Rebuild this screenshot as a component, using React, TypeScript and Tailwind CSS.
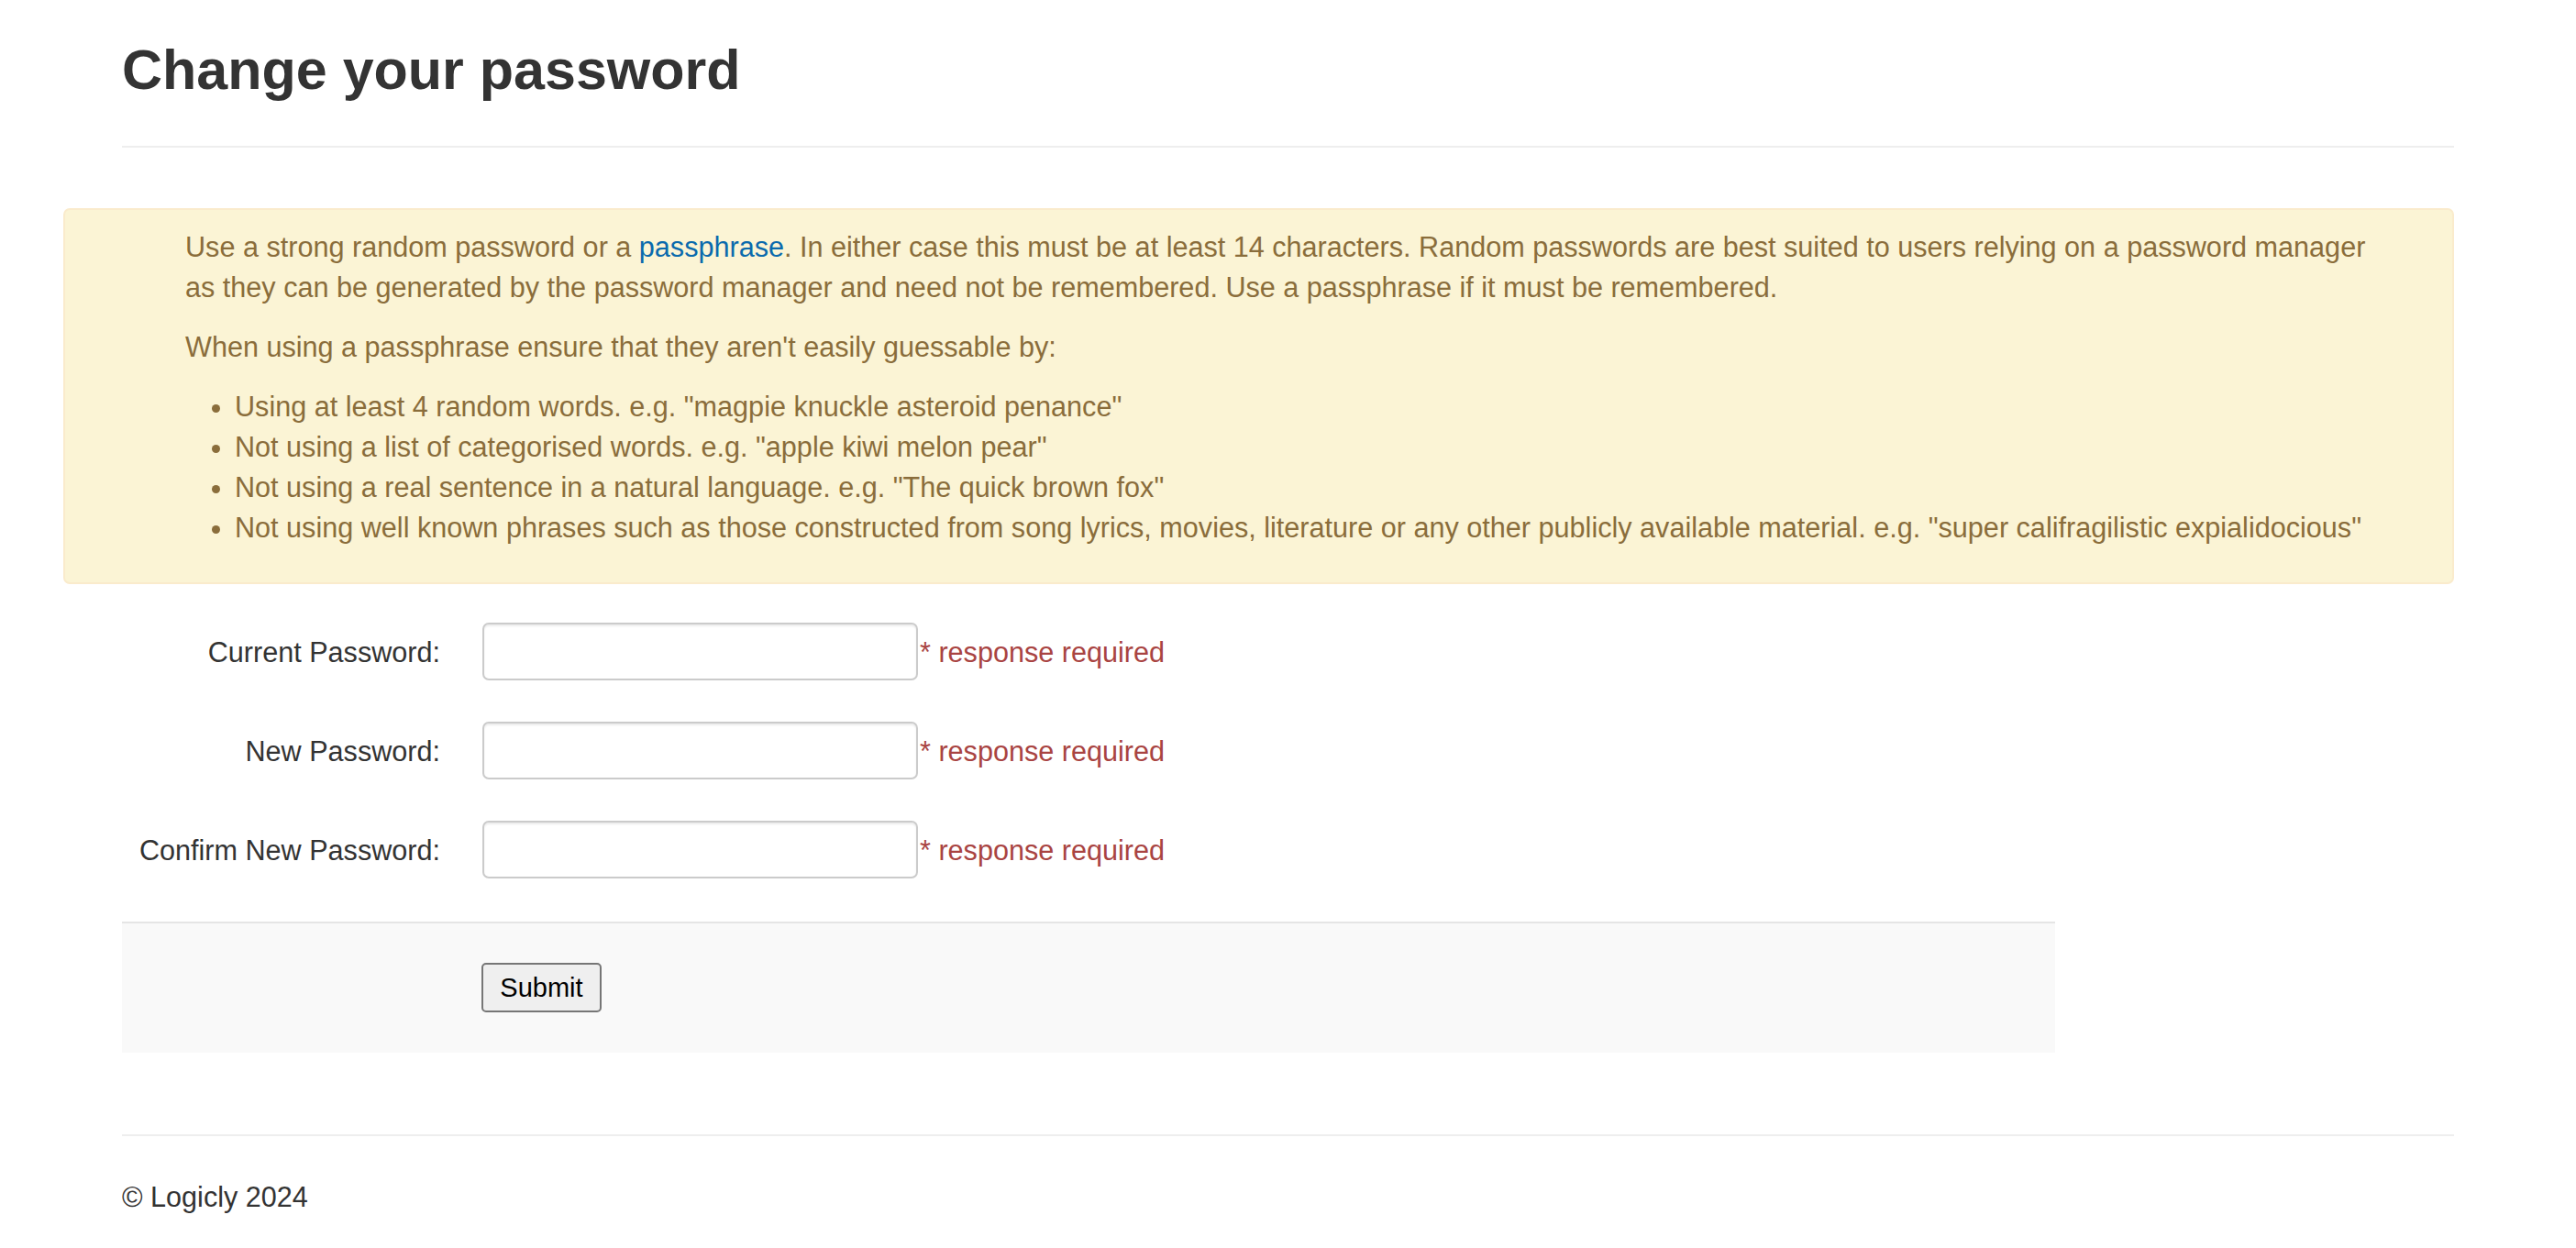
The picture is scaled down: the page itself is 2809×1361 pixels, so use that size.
import React from "react"

const tips = [
  'Using at least 4 random words. e.g. "magpie knuckle asteroid penance"',
  'Not using a list of categorised words. e.g. "apple kiwi melon pear"',
  'Not using a real sentence in a natural language. e.g. "The quick brown fox"',
  'Not using well known phrases such as those constructed from song lyrics, movies, literature or any other publicly available material. e.g. "super califragilistic expialidocious"',
]

const fields = ["Current Password:", "New Password:", "Confirm New Password:"]

function PasswordRow({ label }: { label: string }) {
  return (
    <div className="flex items-center">
      <label className="w-[347px] shrink-0 text-right text-[#333]">{label}</label>
      <input
        type="password"
        className="ml-[46px] h-[63px] w-[475px] rounded-[7px] border-2 border-[#cbcbcb] bg-white px-3 shadow-[inset_0_2px_2px_rgba(0,0,0,0.075)] outline-none"
      />
      <span className="ml-[2px] text-[#a94442]">* response required</span>
    </div>
  )
}

export default function App() {
  return (
    <div className="min-h-screen bg-white px-[133px] font-['Liberation_Sans',Arial,sans-serif] text-[30.6px] leading-[44px] text-[#333]">
      <h1 className="pt-[43px] text-[61px] font-bold leading-[67px] text-[#333]">
        Change your password
      </h1>
      <hr className="mt-[49px] border-t-2 border-[#eee]" />

      <div className="mt-[66px] ml-[-64px] rounded-[7px] border-2 border-[#faebcc] bg-[#fbf4d5] pt-[18px] pb-[38px] pl-[131px] pr-[70px] text-[#8a6d3b]">
        <p>
          Use a strong random password or a{" "}
          <a href="#" className="text-[#0a6aad]">
            passphrase
          </a>
          . In either case this must be at least 14 characters. Random passwords are best suited to users relying on a
          password manager as they can be generated by the password manager and need not be remembered. Use a
          passphrase if it must be remembered.
        </p>
        <p className="mt-[21px]">When using a passphrase ensure that they aren't easily guessable by:</p>
        <ul className="mt-[21px] list-disc pl-[54px]">
          {tips.map((t) => (
            <li key={t}>{t}</li>
          ))}
        </ul>
      </div>

      <form className="mt-[42px]" onSubmit={(e) => e.preventDefault()}>
        <div className="flex flex-col gap-[45px]">
          {fields.map((f) => (
            <PasswordRow key={f} label={f} />
          ))}
        </div>
        <div className="mt-[47px] w-[2108px] border-t-2 border-[#e5e5e5] bg-[#f9f9f9] pt-[43px] pb-[44px] pl-[392px]">
          <button
            type="submit"
            className="h-[54px] w-[131px] rounded-[5px] border-2 border-[#767676] bg-[#efefef] text-[29px] leading-none text-black"
          >
            Submit
          </button>
        </div>
      </form>

      <hr className="mt-[89px] border-t-2 border-[#eee]" />
      <footer className="pt-[44px] pb-[40px]">© Logicly 2024</footer>
    </div>
  )
}
